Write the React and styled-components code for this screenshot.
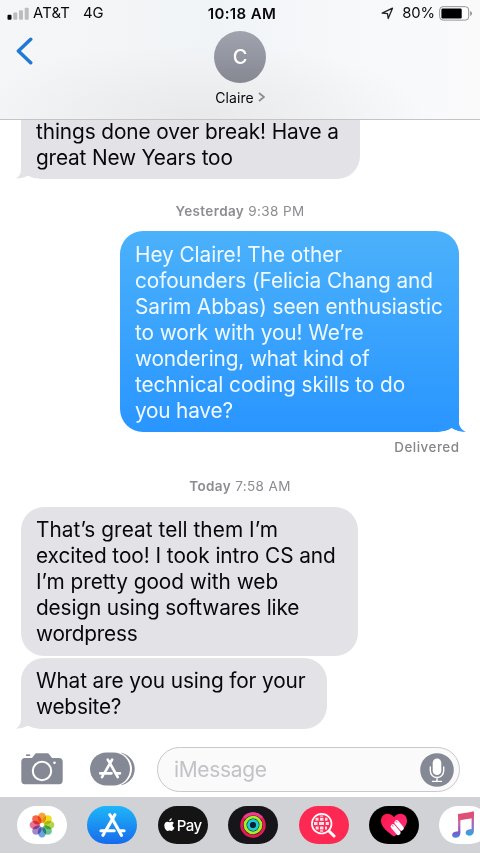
import React from 'react';
import styled, { createGlobalStyle } from 'styled-components';

const GlobalStyle = createGlobalStyle`
  * { box-sizing: border-box; }
  body { margin: 0; background: #fff; }
`;

const Phone = styled.div`
  width: 480px;
  height: 853px;
  display: flex;
  flex-direction: column;
  overflow: hidden;
  background: #fff;
  color: #08080c;
  font-family: Inter, 'Liberation Sans', sans-serif;
  svg { display: block; flex: none; }
`;

const Header = styled.header`
  position: relative;
  z-index: 1;
  height: 120px;
  flex: none;
  display: flex;
  flex-direction: column;
  background:
    radial-gradient(ellipse 230px 75px at 195px 118px, rgba(232, 232, 233, 0.95), rgba(236, 236, 237, 0.6) 55%, transparent),
    linear-gradient(90deg, #f5f6f7, #f1f4f7 45%, #f6f8fa 70%, #fafafb);
  border-bottom: 1px solid #c4c4c7;
`;

const StatusBar = styled.div`
  height: 27px;
  flex: none;
  display: grid;
  grid-template-columns: 1fr auto 1fr;
  align-items: center;
  padding: 0 7px;
  font-size: 14.8px;
  line-height: 27px;
`;

const StatusGroup = styled.div`
  display: flex;
  align-items: center;
  justify-content: ${(p) => (p.$end ? 'flex-end' : 'flex-start')};
`;

const StatusText = styled.span`
  letter-spacing: ${(p) => p.$track || '0'};
  margin-left: ${(p) => p.$gap || 0}px;
  margin-right: ${(p) => p.$after || 0}px;
`;

const Clock = styled.div`
  font-weight: 600;
  font-size: 15px;
  letter-spacing: 0.4px;
  padding-left: 4px;
`;

const NavBar = styled.div`
  flex: 1;
  display: grid;
  grid-template-columns: 1fr auto 1fr;
  align-items: start;
`;

const BackButton = styled.div`
  padding: 10px 0 0 15px;
`;

const Contact = styled.div`
  display: flex;
  flex-direction: column;
  align-items: center;
  padding-top: 4px;
`;

const Avatar = styled.div`
  width: 52px;
  height: 52px;
  border-radius: 50%;
  background: linear-gradient(#a1a4af, #858791);
  color: #fff;
  font-size: 20px;
  font-weight: 500;
  line-height: 53px;
  text-align: center;
`;

const ContactName = styled.div`
  display: flex;
  align-items: center;
  gap: 4px;
  margin-top: 5px;
  height: 18px;
  font-size: 14px;
  letter-spacing: 0.1px;
`;

const Thread = styled.main`
  flex: 1;
  min-height: 0;
  display: flex;
  flex-direction: column;
  align-items: flex-start;
  padding: 0 21px;
`;

const Bubble = styled.div`
  position: relative;
  flex: none;
  width: ${(p) => p.$width}px;
  align-self: ${(p) => (p.$sent ? 'flex-end' : 'flex-start')};
  padding: ${(p) => (p.$cut ? '0 0 8px 15px' : p.$sent ? '11px 0 8px 15px' : '10px 0 9px 15px')};
  margin-top: ${(p) => p.$top || 0}px;
  border-radius: ${(p) => (p.$cut ? '0 0 23px 23px' : '23px')};
  background: ${(p) => (p.$sent ? 'linear-gradient(#4bb1fb, #2995ff)' : '#e3e2e7')};
  color: ${(p) => (p.$sent ? '#f0fbff' : '#08080c')};
  font-size: 20.8px;
  line-height: 26px;
`;

const Line = styled.div`
  position: relative;
  z-index: 1;
  white-space: nowrap;
  letter-spacing: ${(p) => p.$track}px;
`;

const TailMark = styled.svg`
  position: absolute;
  bottom: 0;
  ${(p) => (p.$sent ? 'right: -7px;' : 'left: -5px;')}
`;

const Stamp = styled.div`
  align-self: center;
  flex: none;
  height: 20px;
  margin-top: ${(p) => p.$top}px;
  font-size: 13.5px;
  line-height: 20px;
  color: #8c8c91;
  letter-spacing: 0.37px;
  b { font-weight: 600; }
`;

const Delivered = styled.div`
  align-self: flex-end;
  flex: none;
  height: 20px;
  margin-top: 5px;
  font-size: 13.4px;
  font-weight: 500;
  line-height: 20px;
  letter-spacing: 0.5px;
  margin-right: -0.5px;
  color: #85858a;
`;

const Composer = styled.div`
  height: 57px;
  flex: none;
  display: flex;
  align-items: flex-start;
  padding: 7px 20px 0 21px;
`;

const ToolIcon = styled.div`
  padding-top: ${(p) => p.$top}px;
  margin-right: ${(p) => p.$gap}px;
`;

const Field = styled.div`
  flex: 1;
  height: 45px;
  display: flex;
  align-items: center;
  justify-content: space-between;
  padding: 0 5px 0 16px;
  border: 1.5px solid #c9c9cd;
  border-radius: 23px;
  background: #fafafa;
  color: #c3c3c7;
  font-size: 21px;
  letter-spacing: -0.35px;
`;

const Drawer = styled.footer`
  height: 56px;
  flex: none;
  display: flex;
  gap: 20.4px;
  padding: 9px 0 0 17px;
  overflow: hidden;
  background: #d1d2d6;
`;

const AppPill = styled.div`
  width: 50px;
  height: 38px;
  flex: none;
  display: flex;
  align-items: center;
  justify-content: center;
  gap: 2px;
  border-radius: 19px;
  background: ${(p) => p.$bg};
  color: #fff;
  font-size: 15px;
  font-weight: 500;
  letter-spacing: -0.5px;
`;

const Signal = () => (
  <svg width="22" height="14" viewBox="0 0 22 14">
    <rect x="0.5" y="7.7" width="4" height="5" rx="1" fill="#08080c" />
    <rect x="6.3" y="5.5" width="4" height="7.2" rx="1" fill="#bcbdc0" />
    <rect x="12" y="3.2" width="4" height="9.5" rx="1" fill="#bcbdc0" />
    <rect x="17.7" y="0.8" width="4" height="11.9" rx="1" fill="#bcbdc0" />
  </svg>
);

const LocationArrow = () => (
  <svg width="13" height="13" viewBox="0 0 13 13">
    <path d="M1.2 6.2 11.5 1.2 7.2 11.5 6.5 6.6Z" fill="none" stroke="#222226" strokeWidth="1.3" strokeLinejoin="round" />
  </svg>
);

const Battery = () => (
  <svg width="34" height="15" viewBox="0 0 34 15">
    <rect x="0.7" y="0.7" width="29" height="13.4" rx="3.3" fill="#fff" stroke="#929295" />
    <rect x="2.4" y="2.5" width="20.3" height="9.9" rx="1.2" fill="#000" />
    <path d="M31.2 5.1c2.4.8 2.4 4 0 4.8Z" fill="#929295" />
  </svg>
);

const Tail = ({ sent }) =>
  sent ? (
    <TailMark $sent width="30" height="24" viewBox="0 0 30 24">
      <path d="M23 0V15C23.2 18.5 25.5 22 30 24C25 24 20.5 23.2 15.5 20.2C12 22.7 7 24 0 24L10 10Z" fill="#2b97ff" />
      <path d="M-0.5 24.2C7 24 12 22.5 15.5 20.2C20 23 25 24 30 24V26H-1Z" fill="#fff" />
    </TailMark>
  ) : (
    <TailMark width="30" height="22" viewBox="0 0 30 22">
      <path d="M5 0V12C5 16 3.5 19.5 0 21.8C4.5 21.6 8.3 20.7 12 18.8C16 21 20 22 27 22V0Z" fill="#e3e2e7" />
      <path d="M0 22C4.5 21.7 8.3 20.7 12 18.8C16 21 20 22 27 22V23H0Z" fill="#fff" />
    </TailMark>
  );

const Camera = () => (
  <svg width="42" height="32" viewBox="0 0 42 32">
    <path d="M5 2.2h4.200" fill="none" stroke="#858995" strokeWidth="1.600" />
    <path d="M4 5h7l2.700-3.600C14.400.5 15.200.3 16.300.3h9.400c1.100 0 1.900.2 2.600 1.100L31 5h7c2.500 0 3.700 1.300 3.700 3.800v18.500c0 2.600-1.200 3.900-3.700 3.900H4c-2.500 0-3.700-1.300-3.700-3.900V8.800C.3 6.300 1.500 5 4 5Z" fill="#858995" />
    <circle cx="21" cy="18" r="9.200" fill="none" stroke="#fff" strokeWidth="2" />
    <circle cx="33.500" cy="9.700" r="1.300" fill="#fff" />
  </svg>
);

const StoreMark = () => (
  <g fill="none" stroke="#fff" strokeLinecap="round" strokeWidth="2.9">
    <path d="M10 1.500 12.200 5M14.700 1.500 6.300 16.200M12.400 5.500 20.800 20.500" />
    <path d="M1.800 16.300H14M19 16.300H23.200M4.800 18.600 3.700 20.500" />
  </g>
);

const StoreGrey = () => (
  <svg width="46" height="34" viewBox="0 0 46 34">
    <path d="M31 1.200C39 3 44.200 9 44.200 17S39 31 31 32.800" fill="#858995" stroke="#858995" />
    <rect x="0" y="0" width="42" height="34" rx="17" fill="#fff" />
    <rect x="0" y="0.500" width="40" height="33" rx="16.500" fill="#858995" />
    <g transform="translate(8.600 6.300) scale(0.920)"><StoreMark /></g>
  </svg>
);

const Mic = () => (
  <svg width="34" height="34" viewBox="0 0 34 34">
    <circle cx="17" cy="17" r="16.800" fill="#858995" />
    <rect x="12.700" y="5.500" width="8.600" height="16.500" rx="4.300" fill="#fff" />
    <path d="M10.300 14v3.500c0 9.200 13.400 9.200 13.400 0V14M17 24.500v3.600M12.500 28.400h9" fill="none" stroke="#fff" strokeWidth="1.400" strokeLinecap="round" />
  </svg>
);

const petals = ['#f9a23a', '#f0dc20', '#b3d44c', '#68c490', '#6ea2e0', '#a588cc', '#e47398', '#f4684a'];

const Petal = styled.ellipse`
  mix-blend-mode: multiply;
`;

const PhotosFlower = () => (
  <svg width="26" height="26" viewBox="0 0 26 26">
    {petals.map((c, i) => (
      <Petal key={c} cx="13" cy="5.800" rx="4.200" ry="5.200" fill={c} transform={`rotate(${i * 45} 13 13)`} />
    ))}
    <circle cx="13" cy="13" r="1.300" fill="#fff" />
  </svg>
);

const Apple = () => (
  <svg width="11" height="14" viewBox="0 0 11 14">
    <path d="M7.800.3C7.900 1.900 6.600 3.300 5.200 3.300 5.100 1.800 6.400.5 7.800.3ZM9.900 4.900C8 6 8.200 8.700 10.500 9.600 9.900 11.200 8.800 12.900 7.600 12.900 6.900 12.900 6.500 12.500 5.600 12.500S4.300 12.900 3.600 12.900C1.900 12.900.3 9.700.3 7.500.3 5.200 1.800 3.800 3.400 3.800 4.300 4 4.900 4.300 5.500 4.300S6.700 3.700 7.900 3.700C8.700 3.800 9.400 4.200 9.900 4.900Z" fill="#fff" />
  </svg>
);

const Rings = () => (
  <svg width="26" height="26" viewBox="0 0 26 26" fill="none" strokeWidth="2.900">
    <circle cx="13" cy="13" r="11.300" stroke="#e71955" />
    <path d="M5 5A11.300 11.300 0 0 1 21 5" stroke="#ee3c8e" strokeLinecap="round" />
    <circle cx="13" cy="13" r="7.900" stroke="#a8ee25" />
    <circle cx="13" cy="13" r="4.500" stroke="#19cbdc" />
    <circle cx="13" cy="13" r="2.500" fill="#082034" />
  </svg>
);

const ImageSearch = () => (
  <svg width="25" height="25" viewBox="0 0 25 25" fill="none" stroke="#fff">
    <circle cx="10.700" cy="10.700" r="9.800" strokeWidth="1.700" />
    <path d="m18.200 18.200 4.800 4.800" strokeWidth="3" strokeLinecap="round" />
    <path d="M4.500 6.200h3M9 6.200h3.400M14 6.200h2.500M3 10.500h3.500M8 10.500h5M14.700 10.500h3.200M4.700 15h3M9 15h3.400M14 15h2" strokeWidth="3" opacity="0.860" />
    <path d="M10.600 2.500v1.200M10.600 17.300v1.500" strokeWidth="3" opacity="0.800" />
  </svg>
);

const HeartTouch = () => (
  <svg width="28" height="25" viewBox="0 0 28 25">
    <defs>
      <linearGradient id="heart" x1="0" y1="0" x2="1" y2="1"><stop stopColor="#ff1742" /><stop offset="1" stopColor="#ff2e8c" /></linearGradient>
    </defs>
    <path d="M14 23.500C7 18.500 1 13.500 1 7.700 1-.4 10.500-1.500 14 4.300 17.500-1.500 27-.4 27 7.700c0 5.800-6 10.800-13 15.800Z" fill="url(#heart)" />
    <g stroke="#fff" strokeWidth="4.600" strokeLinecap="round"><path d="m16.700 9.500 4.800 5.800M13 13.500l5.300 6.300" /></g>
    <path d="m14.500 11.200 6 7" stroke="#e8426d" strokeWidth="0.800" />
    <path d="m15.500 8.700 2 .3M11.800 12.700l1.800.3" stroke="#f85a80" strokeWidth="1" />
  </svg>
);

const MusicNote = () => (
  <svg width="26" height="28" viewBox="0 0 26 28">
    <defs>
      <linearGradient id="note" x1="0" y1="0" x2="0" y2="1"><stop stopColor="#ef4562" /><stop offset="0.400" stopColor="#ce659e" /><stop offset="0.780" stopColor="#795cca" /><stop offset="1" stopColor="#4586ee" /></linearGradient>
      <linearGradient id="note2" x1="0" y1="0" x2="0" y2="1"><stop stopColor="#ef4562" /><stop offset="0.600" stopColor="#9272c7" /><stop offset="1" stopColor="#26a8e5" /></linearGradient>
    </defs>
    <path d="M7.300 3 22.800.5V7L7.300 9.500Z" fill="#df5078" />
    <path d="M7.100 3h2.300v19c0 3-2 4.800-4.900 4.800-4.500 0-4.400-5.500-.3-6.100l2.900-.5Z" fill="url(#note)" />
    <path d="M20.600.7h2.300v19.200c0 3-2 4.800-4.900 4.800-4.500 0-4.400-5.500-.3-6.100l2.900-.5Z" fill="url(#note2)" />
  </svg>
);

const messages = {
  first: [['things done over break! Have a', -0.1], ['great New Years too', -0.17]],
  sent: [
    ['Hey Claire! The other', -0.06],
    ['cofounders (Felicia Chang and', -0.09],
    ['Sarim Abbas) seen enthusiastic', -0.07],
    ['to work with you! We’re', -0.06],
    ['wondering, what kind of', -0.13],
    ['technical coding skills to do', -0.08],
    ['you have?', -0.2],
  ],
  reply: [
    ['That’s great tell them I’m', 0.06],
    ['excited too! I took intro CS and', -0.05],
    ['I’m pretty good with web', -0.03],
    ['design using softwares like', -0.13],
    ['wordpress', -0.25],
  ],
  question: [['What are you using for your', -0.11], ['website?', -0.2]],
};

const Lines = ({ rows }) => rows.map(([text, track]) => <Line key={text} $track={track}>{text}</Line>);

export default function App() {
  return (
    <Phone>
      <GlobalStyle />
      <Header>
        <StatusBar>
          <StatusGroup>
            <Signal />
            <StatusText $gap={4} $track="0.2px">AT&amp;T</StatusText>
            <StatusText $gap={13}>4G</StatusText>
          </StatusGroup>
          <Clock>10:18 AM</Clock>
          <StatusGroup $end>
            <LocationArrow />
            <StatusText $gap={8} $after={4} $track="-0.1px">80%</StatusText>
            <Battery />
          </StatusGroup>
        </StatusBar>
        <NavBar>
          <BackButton>
            <svg width="18" height="28" viewBox="0 0 18 28"><path d="M15.700 2.300 3.400 14 15.700 25.700" fill="none" stroke="#2079d5" strokeWidth="3.500" strokeLinecap="round" strokeLinejoin="round" /></svg>
          </BackButton>
          <Contact>
            <Avatar>C</Avatar>
            <ContactName>
              Claire
              <svg width="7" height="10" viewBox="0 0 7 10"><path d="m1 1 5 4-5 4" fill="none" stroke="#89898e" strokeWidth="1.700" /></svg>
            </ContactName>
          </Contact>
        </NavBar>
      </Header>

      <Thread>
        <Bubble $width={339} $cut $top={-1}><Lines rows={messages.first} /><Tail /></Bubble>
        <Stamp $top={22}><b>Yesterday</b> 9:38 PM</Stamp>
        <Bubble $sent $width={339} $top={10}><Lines rows={messages.sent} /><Tail sent /></Bubble>
        <Delivered>Delivered</Delivered>
        <Stamp $top={19}><b>Today</b> 7:58 AM</Stamp>
        <Bubble $width={337} $top={11}><Lines rows={messages.reply} /></Bubble>
        <Bubble $width={306} $top={2}><Lines rows={messages.question} /><Tail /></Bubble>
      </Thread>

      <Composer>
        <ToolIcon $top={6} $gap={27}><Camera /></ToolIcon>
        <ToolIcon $top={5} $gap={21}><StoreGrey /></ToolIcon>
        <Field>iMessage<Mic /></Field>
      </Composer>

      <Drawer>
        <AppPill $bg="#fff"><PhotosFlower /></AppPill>
        <AppPill $bg="linear-gradient(#1eb6f8, #176bec)">
          <svg width="27" height="24" viewBox="0 0 25 22"><StoreMark /></svg>
        </AppPill>
        <AppPill $bg="#131413"><Apple />Pay</AppPill>
        <AppPill $bg="#15151a"><Rings /></AppPill>
        <AppPill $bg="#fd2953"><ImageSearch /></AppPill>
        <AppPill $bg="#000"><HeartTouch /></AppPill>
        <AppPill $bg="#fff"><MusicNote /></AppPill>
      </Drawer>
    </Phone>
  );
}
